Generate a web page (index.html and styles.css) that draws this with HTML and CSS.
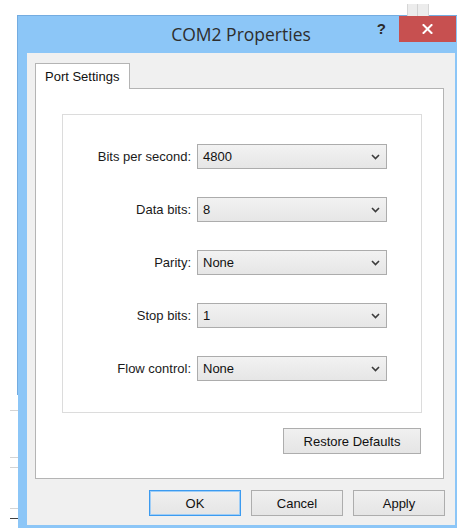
FILE: index.html
```html
<!DOCTYPE html>
<html lang="en">
<head>
<meta charset="utf-8">
<title>COM2 Properties</title>
<link rel="stylesheet" href="styles.css">
</head>
<body>
<div class="desktop">
  <div class="backwin backwin-top"></div>
  <div class="backwin backwin-left">
    <span class="rule"></span>
    <span class="rule rule-b"></span>
    <span class="rule rule-c"></span>
    <span class="rule rule-d"></span>
    <span class="rule rule-dark"></span>
  </div>

  <div class="window">
    <div class="titlebar">
      <span></span>
      <h1 class="title">COM2 Properties</h1>
      <div class="controls">
        <span class="help">?</span>
        <button class="close" type="button" aria-label="Close">
          <svg width="11" height="10" viewBox="0 0 11 10"><path d="M1.5 1 L9.5 9 M9.5 1 L1.5 9" stroke="#fff" stroke-width="2" stroke-linecap="square"/></svg>
        </button>
      </div>
    </div>

    <div class="client">
      <div class="tabs">
        <div class="tab">Port Settings</div>
      </div>
      <div class="panel">
        <div class="group">
          <label class="label">Bits per second:</label>
          <div class="combo"><span>4800</span><svg class="chev" width="9" height="6" viewBox="0 0 9 6"><path d="M1 1 L4.5 4.5 L8 1" fill="none" stroke="#3c3c3c" stroke-width="1.6"/></svg></div>

          <label class="label">Data bits:</label>
          <div class="combo"><span>8</span><svg class="chev" width="9" height="6" viewBox="0 0 9 6"><path d="M1 1 L4.5 4.5 L8 1" fill="none" stroke="#3c3c3c" stroke-width="1.6"/></svg></div>

          <label class="label">Parity:</label>
          <div class="combo"><span>None</span><svg class="chev" width="9" height="6" viewBox="0 0 9 6"><path d="M1 1 L4.5 4.5 L8 1" fill="none" stroke="#3c3c3c" stroke-width="1.6"/></svg></div>

          <label class="label">Stop bits:</label>
          <div class="combo"><span>1</span><svg class="chev" width="9" height="6" viewBox="0 0 9 6"><path d="M1 1 L4.5 4.5 L8 1" fill="none" stroke="#3c3c3c" stroke-width="1.6"/></svg></div>

          <label class="label">Flow control:</label>
          <div class="combo"><span>None</span><svg class="chev" width="9" height="6" viewBox="0 0 9 6"><path d="M1 1 L4.5 4.5 L8 1" fill="none" stroke="#3c3c3c" stroke-width="1.6"/></svg></div>
        </div>
        <button class="btn restore" type="button">Restore Defaults</button>
      </div>
      <div class="actions">
        <button class="btn default" type="button">OK</button>
        <button class="btn" type="button">Cancel</button>
        <button class="btn" type="button">Apply</button>
      </div>
    </div>
  </div>
</div>
</body>
</html>
```

FILE: styles.css
```css
* {
  box-sizing: border-box;
}

html, body {
  margin: 0;
  padding: 0;
  background: #ffffff;
}

.desktop {
  position: relative;
  width: 457px;
  height: 528px;
  overflow: hidden;
  font-family: "Liberation Sans", Arial, sans-serif;
  font-size: 13px;
  color: #1a1a1a;
}

/* windows peeking out from behind the dialog */
.backwin {
  position: absolute;
  background: #ffffff;
}

.backwin-top {
  left: 407px;
  top: 4px;
  width: 22px;
  height: 12px;
  background: #ececec;
  border-left: 1px solid #d6d6d6;
  border-right: 1px solid #d6d6d6;
}

.backwin-top::after {
  content: "";
  position: absolute;
  left: 9px;
  top: 0;
  bottom: 0;
  border-left: 1px solid #d2d2d2;
}

.backwin-left {
  left: 0;
  top: 395px;
  width: 18px;
  height: 133px;
}

.rule {
  position: absolute;
  left: 10px;
  right: 0;
  top: 15px;
  border-top: 1px solid #d4d4d4;
}

.rule-b { top: 62px; }
.rule-c { top: 72px; }
.rule-d { top: 113px; }
.rule-dark { top: 123px; border-top-color: #404040; }

/* dialog frame */
.window {
  margin: 15px 0 0 17px;
  width: 440px;
  height: 513px;
  background: #8cc6f7;
  border-top: 1px solid #74ace0;
  border-left: 1px solid #74ace0;
  padding: 0 2px 3px 9px;
  display: flex;
  flex-direction: column;
}

.titlebar {
  height: 37px;
  display: grid;
  grid-template-columns: 1fr auto 1fr;
  align-items: center;
}

.title {
  margin: 0;
  font-family: "Open Sans", "Noto Sans", sans-serif;
  font-weight: 400;
  font-size: 17.5px;
  color: #2e2e2e;
  white-space: nowrap;
  padding-bottom: 1px;
}

.controls {
  justify-self: end;
  align-self: start;
  display: flex;
  align-items: flex-start;
  margin-right: -1px;
}

.help {
  font-family: "Liberation Sans", Arial, sans-serif;
  font-weight: 700;
  font-size: 15px;
  color: #2a2a2a;
  margin: 4px 13px 0 0;
}

.close {
  width: 57px;
  height: 26px;
  border: none;
  padding: 0;
  background: #c75050;
  display: flex;
  align-items: center;
  justify-content: center;
}

/* client area */
.client {
  flex: 1;
  background: #f0f0f0;
  padding: 10px 10px 9px 8px;
  display: flex;
  flex-direction: column;
}

.tabs {
  display: flex;
  position: relative;
  z-index: 1;
  margin-bottom: -1px;
}

.tab {
  height: 26px;
  width: 95px;
  background: #ffffff;
  border: 1px solid #b4b4b4;
  border-bottom: none;
  padding: 5px 0 0 9px;
  color: #111;
  white-space: nowrap;
}

.panel {
  height: 391px;
  margin-right: 1px;
  background: #ffffff;
  border: 1px solid #b4b4b4;
  padding: 25px 21px 0 26px;
  display: flex;
  flex-direction: column;
  align-items: flex-end;
}

.group {
  width: 360px;
  height: 299px;
  border: 1px solid #dcdcdc;
  padding-top: 29px;
  display: grid;
  grid-template-columns: 128px 190px;
  grid-auto-rows: 25px;
  column-gap: 6px;
  row-gap: 28px;
  align-content: start;
}

.label {
  text-align: right;
  align-self: center;
  white-space: nowrap;
  color: #1a1a1a;
}

.combo {
  border: 1px solid #acacac;
  background: linear-gradient(#f2f2f2, #e6e6e6);
  display: flex;
  align-items: center;
  justify-content: space-between;
  padding: 0 6px 0 5px;
  color: #111;
}

.btn {
  font-family: "Liberation Sans", Arial, sans-serif;
  font-size: 13px;
  color: #111;
  height: 26px;
  width: 92px;
  border: 1px solid #adadad;
  background: linear-gradient(#f0f0f0, #e5e5e5);
  padding: 0;
}

.restore {
  width: 138px;
  margin-top: 15px;
  margin-right: 1px;
}

.default {
  border-color: #3c9bf0;
  box-shadow: inset 0 0 0 1px #9fcdf6;
}

.actions {
  margin-top: 11px;
  display: flex;
  justify-content: flex-end;
  gap: 10px;
}
```
